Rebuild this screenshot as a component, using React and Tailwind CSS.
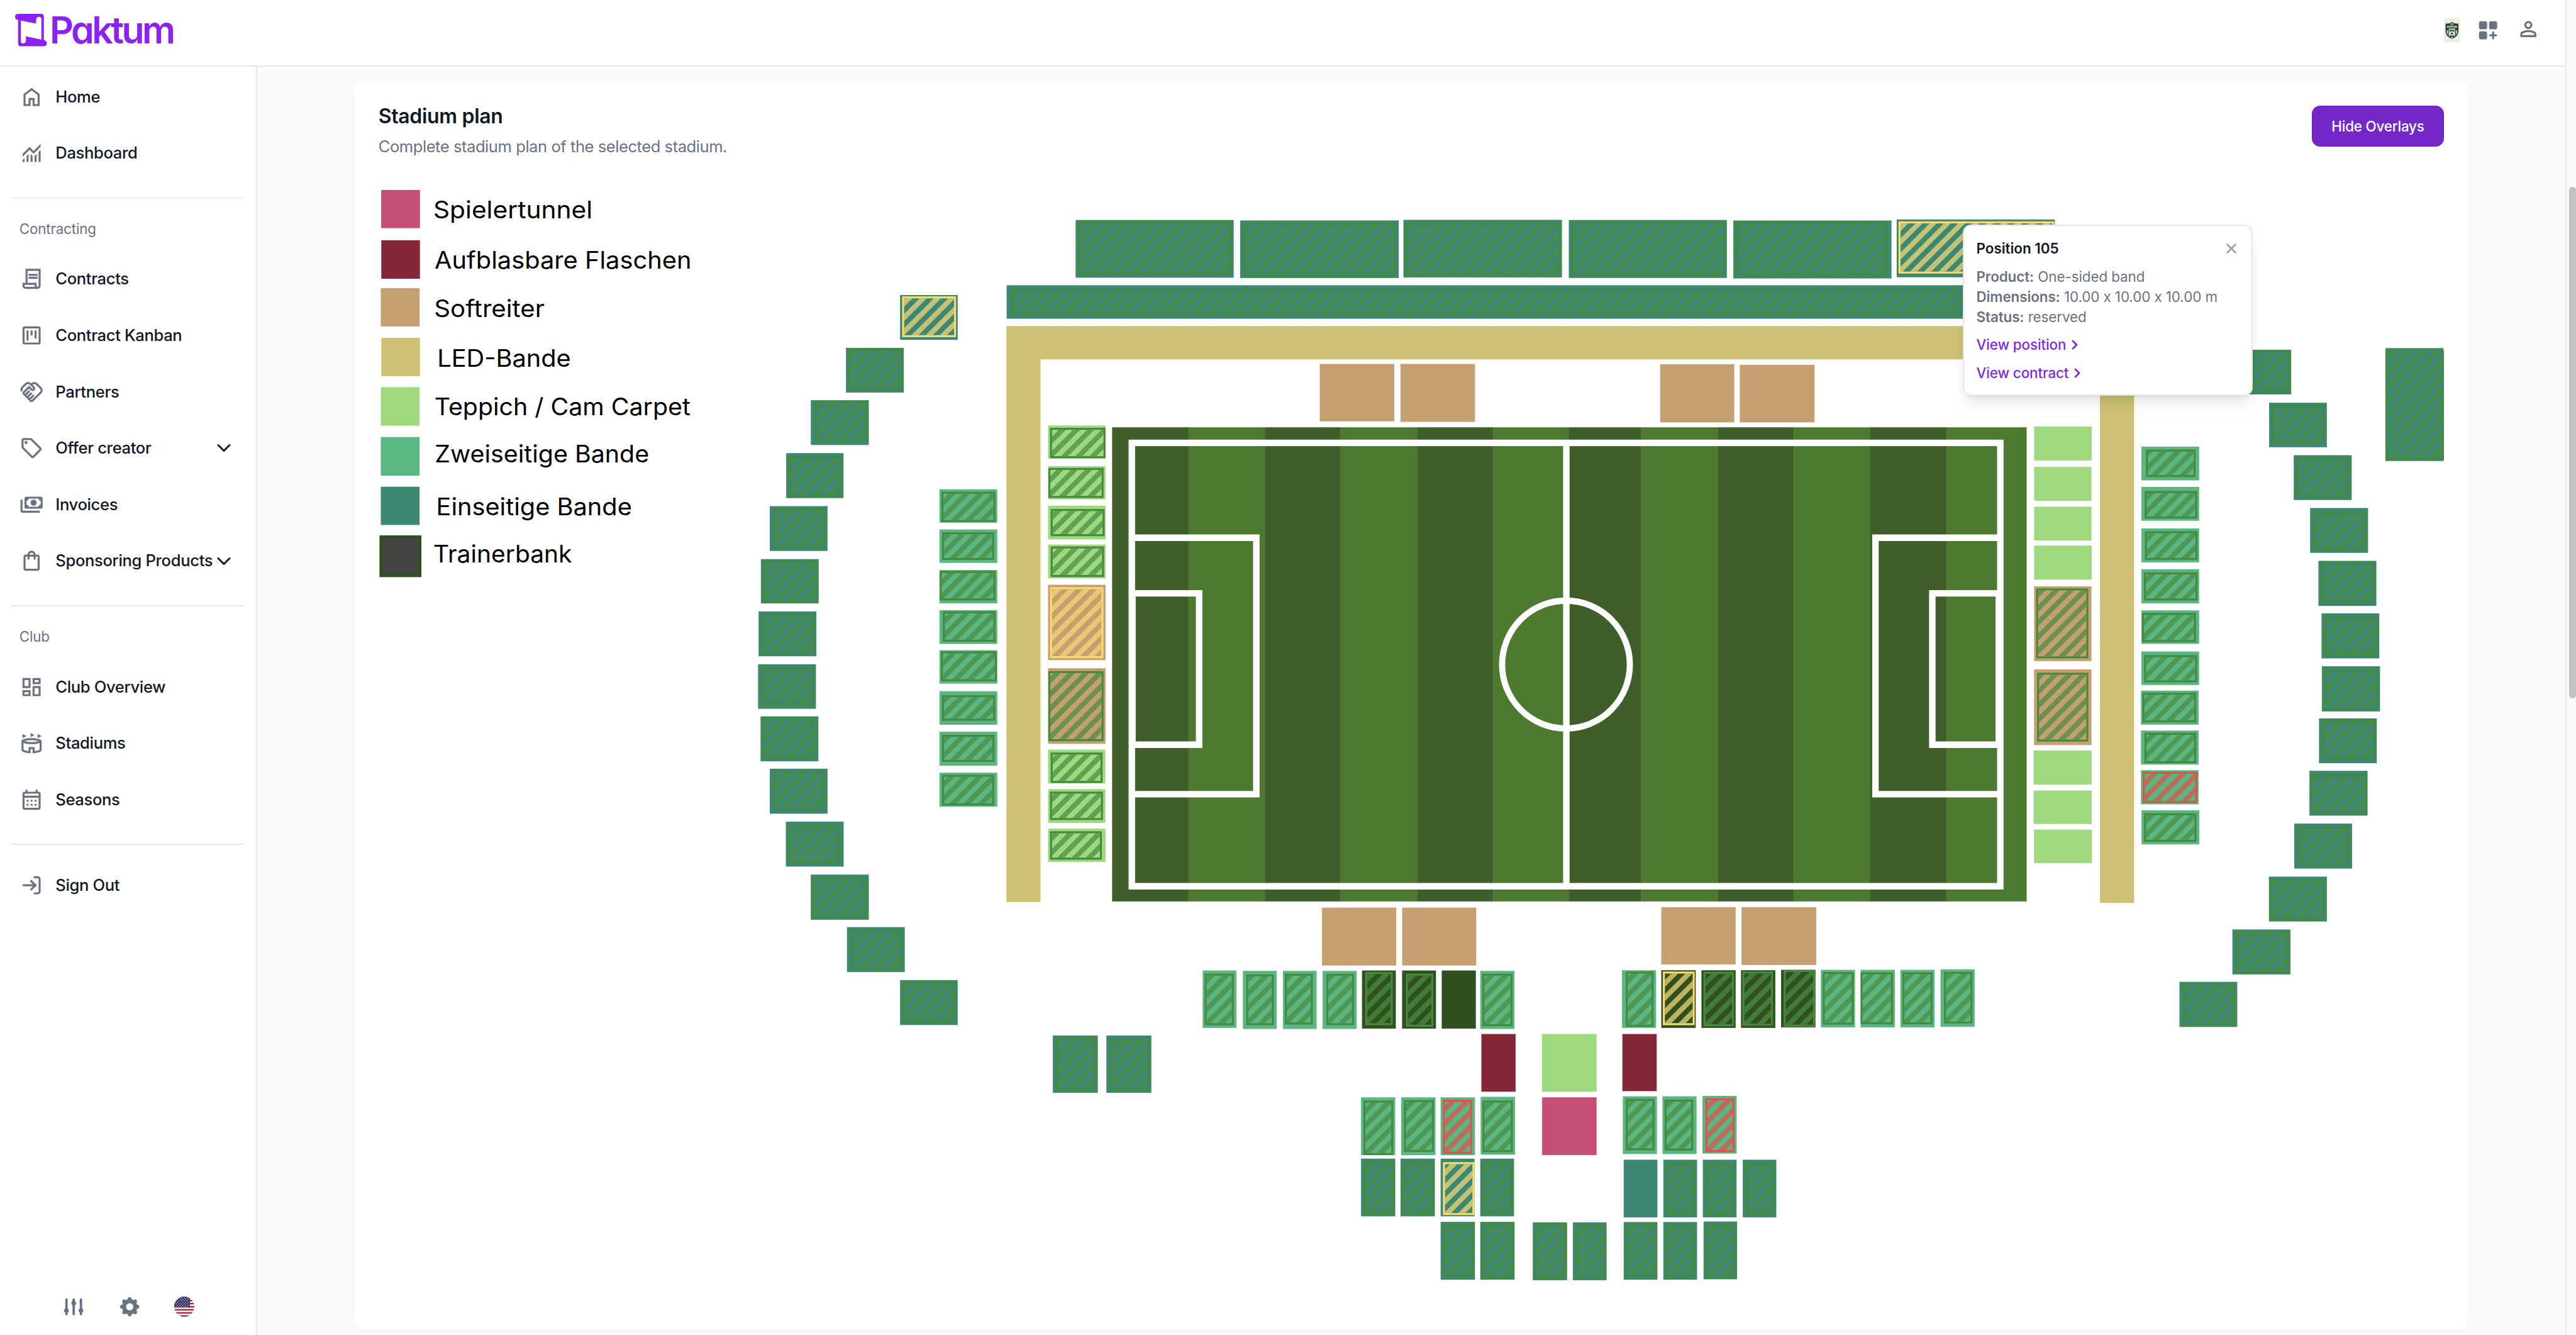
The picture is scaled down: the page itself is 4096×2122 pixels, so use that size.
import React from "react";
import { ChevronDown, ChevronRight, X } from "lucide-react";
import {
  MdOutlineHandshake,
  MdOutlineLocalOffer,
  MdOutlineDashboard,
  MdOutlineStadium,
} from "react-icons/md";

/* ---------- icons ---------- */

function Glyph({ d, children }) {
  return (
    <svg viewBox="0 0 24 24" fill="currentColor" fillRule="evenodd" className="size-full">
      {d ? <path d={d} /> : children}
    </svg>
  );
}

const HOME = "M6 19h3v-6h6v6h3v-9l-6-4.5L6 10v9Zm-2 2V9l8-6l8 6v12h-7v-6h-2v6H4Z";
const CHART =
  "M3 21v-2l2-2v4H3Zm4 0v-6l2-2v8H7Zm4 0v-8l2 2.025V21h-2Zm4 0v-5.975l2-2V21h-2Zm4 0V11l2-2v12h-2ZM3 15.825V13l7-7l4 4l7-7v2.825l-7 7l-4-4l-7 7Z";
const CONTRACT =
  "M6 22q-1.25 0-2.125-.875T3 19v-3h3V2h15v17q0 1.25-.875 2.125T18 22H6ZM18 20q.425 0 .713-.288T19 19V4H8v12h9v3q0 .425.288.713T18 20ZM9 9V7h9v2H9Zm0 3v-2h9v2H9ZM6 20h9v-2H5v1q0 .425.288.713T6 20Z";
const KANBAN =
  "M7 17h2V7H7v10Zm8-2h2V7h-2v8Zm-4-3h2V7h-2v5ZM5 21q-.825 0-1.413-.588T3 19V5q0-.825.588-1.413T5 3h14q.825 0 1.413.588T21 5v14q0 .825-.588 1.413T19 21H5Zm0-2h14V5H5v14Z";
const BILLS =
  "M7 4h14a2 2 0 0 1 2 2v8a2 2 0 0 1-2 2H7a2 2 0 0 1-2-2V6a2 2 0 0 1 2-2ZM9 6a2 2 0 0 1-2 2v4a2 2 0 0 1 2 2h10a2 2 0 0 1 2-2V8a2 2 0 0 1-2-2H9ZM14 7a3 3 0 1 1 0 6a3 3 0 0 1 0-6ZM1 7h2v11h17v2H3a2 2 0 0 1-2-2V7Z";
const BAG =
  "M6 22q-.825 0-1.413-.588T4 20V8q0-.825.588-1.413T6 6h2q0-1.65 1.175-2.825T12 2q1.65 0 2.825 1.175T16 6h2q.825 0 1.413.588T20 8v12q0 .825-.588 1.413T18 22H6Zm0-2h12V8h-2v2q0 .425-.288.713T15 11q-.425 0-.713-.288T14 10V8h-4v2q0 .425-.288.713T9 11q-.425 0-.713-.288T8 10V8H6v12Zm4-14h4q0-.825-.588-1.413T12 4q-.825 0-1.413.588T10 6Z";
const PERSON =
  "M12 12q-1.65 0-2.825-1.175T8 8t1.175-2.825T12 4t2.825 1.175T16 8t-1.175 2.825T12 12m-8 8v-2.8q0-.85.438-1.562T5.6 14.55q1.55-.775 3.15-1.162T12 13t3.25.388t3.15 1.162q.725.375 1.163 1.088T20 17.2V20zm2-2h12v-.8q0-.275-.137-.5t-.363-.35q-1.35-.675-2.725-1.012T12 15t-2.775.338T6.5 16.35q-.225.125-.363.35T6 17.2zm6-8q.825 0 1.413-.587T14 8t-.587-1.412T12 6t-1.412.588T10 8t.588 1.413T12 10";

function CalendarIcon() {
  return (
    <Glyph>
      <path d="M5 22q-.825 0-1.413-.588T3 20V6q0-.825.588-1.413T5 4h1V2h2v2h8V2h2v2h1q.825 0 1.413.588T21 6v14q0 .825-.588 1.413T19 22H5Zm0-2h14V10H5v10ZM5 8h14V6H5v2Z" />
      {[8, 12, 16].map((cx) => (
        <g key={cx}>
          <circle cx={cx} cy="13" r="1.05" />
          <circle cx={cx} cy="17" r="1.05" />
        </g>
      ))}
    </Glyph>
  );
}

function SignOutIcon() {
  return (
    <svg viewBox="0 0 24 24" fill="none" stroke="currentColor" strokeWidth="2" strokeLinecap="round" strokeLinejoin="round" className="size-full">
      <path d="M15 4h3a2 2 0 0 1 2 2v12a2 2 0 0 1-2 2h-3M4 12h12M11.6 7.8L16 12l-4.4 4.2" />
    </svg>
  );
}

function AppsAddIcon() {
  return (
    <Glyph>
      <rect x="3" y="3" width="8" height="8" rx="2" />
      <rect x="13" y="3" width="8" height="8" rx="2" />
      <rect x="3" y="13" width="8" height="8" rx="2" />
      <path d="M17 13a1 1 0 0 1 1 1v2h2a1 1 0 0 1 0 2h-2v2a1 1 0 0 1-2 0v-2h-2a1 1 0 0 1 0-2h2v-2a1 1 0 0 1 1-1Z" />
    </Glyph>
  );
}

function SlidersIcon() {
  return (
    <svg viewBox="0 0 20 20" fill="currentColor" className="size-[38.4px]">
      <path d="M5 4a1 1 0 00-2 0v7.268a2 2 0 000 3.464V16a1 1 0 102 0v-1.268a2 2 0 000-3.464V4zM11 4a1 1 0 10-2 0v1.268a2 2 0 000 3.464V16a1 1 0 102 0V8.732a2 2 0 000-3.464V4zM16 3a1 1 0 011 1v7.268a2 2 0 010 3.464V16a1 1 0 11-2 0v-1.268a2 2 0 010-3.464V4a1 1 0 011-1z" />
    </svg>
  );
}

function GearIcon() {
  return (
    <svg viewBox="0 0 20 20" fill="currentColor" fillRule="evenodd" className="size-[38.4px]">
      <path d="M11.49 3.17c-.38-1.56-2.6-1.56-2.98 0a1.532 1.532 0 01-2.286.948c-1.372-.836-2.942.734-2.106 2.106.54.886.061 2.042-.947 2.287-1.561.379-1.561 2.6 0 2.978a1.532 1.532 0 01.947 2.287c-.836 1.372.734 2.942 2.106 2.106a1.532 1.532 0 012.287.947c.379 1.561 2.6 1.561 2.978 0a1.533 1.533 0 012.287-.947c1.372.836 2.942-.734 2.106-2.106a1.533 1.533 0 01.947-2.287c1.561-.379 1.561-2.6 0-2.978a1.532 1.532 0 01-.947-2.287c.836-1.372-.734-2.942-2.106-2.106a1.532 1.532 0 01-2.287-.947zM10 13a3 3 0 100-6 3 3 0 000 6z" />
    </svg>
  );
}

function FlagIcon() {
  const stripes = [0, 1, 2, 3, 4, 5, 6];
  const stars = [];
  for (let r = 0; r < 7; r++) for (let c = 0; c < 6; c++) stars.push([2 + c * 2.7 + (r % 2) * 1.35, 1.2 + r * 1.5]);
  return (
    <svg viewBox="0 0 20 20" className="size-8">
      <defs>
        <clipPath id="flag-round">
          <circle cx="10" cy="10" r="10" />
        </clipPath>
      </defs>
      <g clipPath="url(#flag-round)">
        <rect width="20" height="20" fill="#fff" />
        {stripes.map((i) => (
          <rect key={i} y={i * 3.08} width="20" height="1.54" fill="#a72a37" />
        ))}
        <rect width="15.6" height="10.8" fill="#36336b" />
        {stars.map(([x, y], i) => (
          <circle key={i} cx={x} cy={y} r="0.45" fill="#fff" fillOpacity={x < 15 ? 1 : 0} />
        ))}
      </g>
    </svg>
  );
}

function ClubCrest() {
  return (
    <svg viewBox="0 0 70 105" className="h-[38.4px] w-[25.6px] shrink-0">
      <rect width="70" height="105" fill="#efece2" />
      <path d="M35 16l8 5q10 3 20 2v34q0 22-28 33Q7 79 7 57V23q10 1 20-2Z" fill="#22442f" />
      <path d="M13 52h4v20l-4-6ZM21 52h4v28l-4-3ZM45 52h4v25l-4 3ZM53 52h4v14l-4 6Z" fill="#efece2" />
      <circle cx="35" cy="66" r="10" fill="#efece2" />
      <path d="M35 61l5 4-2 6h-6l-2-6Z" fill="#22442f" />
      <path d="M30 80l5 4 5-4v4l-5 5-5-5Z" fill="#efece2" />
      <g fill="#efece2" textAnchor="middle" fontFamily="Inter, sans-serif" fontWeight="800">
        <text x="35" y="31" fontSize="10">FC</text>
        <text x="35" y="41" fontSize="9" textLength="46" lengthAdjust="spacingAndGlyphs">SPORTING</text>
        <text x="35" y="51" fontSize="9" textLength="28" lengthAdjust="spacingAndGlyphs">DEMO</text>
      </g>
    </svg>
  );
}

function BrandMark() {
  return (
    <svg viewBox="0 0 62 63" className="h-[51.6px] w-[50.8px]" fill="#8b21f2" fillRule="evenodd">
      <path d="M6 0H51Q55.8 0 55.8 5V51Q61.6 52 61.6 57Q61.6 63 55 63H11Q5.8 63 5.8 57V12Q0 11 0 6Q0 0 6 0ZM11.2 13.2V52Q11.2 57.4 15 57.4Q21 57.4 21 51V43.6L51 50V10.5Q51 5.7 46.5 5.7Q41 5.7 40.6 13V19Z" />
    </svg>
  );
}

/* ---------- shell ---------- */

function Header() {
  return (
    <header className="flex h-[105.6px] shrink-0 items-center justify-between border-b-2 border-gray-200 bg-white pr-[39px] pb-[8px] pl-[23.8px]">
      <div className="flex items-center gap-[4.5px]">
        <BrandMark />
        <span className="text-[59px] leading-[60px] font-semibold tracking-[-3.6px] text-[#8b21f2] [font-feature-settings:'cv11']">
          Paktum
        </span>
      </div>
      <div className="flex items-center gap-[25.6px] text-gray-500">
        <ClubCrest />
        <div className="size-[38.4px]"><AppsAddIcon /></div>
        <div className="-mt-[3px] size-[38.4px]"><Glyph d={PERSON} /></div>
      </div>
    </header>
  );
}

function NavItem({ icon, label, expandable }) {
  return (
    <a className="flex h-[89.6px] items-center pr-[32.5px] pl-[30.7px]">
      <span className="size-[38.4px] shrink-0 text-gray-500">{icon}</span>
      <span className="ml-[19.2px] flex-1 text-[25.6px] leading-[38.4px] font-medium tracking-[-0.36px] whitespace-nowrap text-gray-900">
        {label}
      </span>
      {expandable && <ChevronDown className="size-[36px] shrink-0 text-gray-900" strokeWidth={2} />}
    </a>
  );
}

function Divider() {
  return <div className="mr-[18.6px] ml-[17.6px] h-[1.6px] shrink-0 bg-gray-200" />;
}

function SectionLabel({ children }) {
  return (
    <div className="h-[83.6px] pt-[26.6px] pl-[30.7px] text-[22.4px] leading-[44.8px] tracking-[-0.15px] text-gray-500">
      {children}
    </div>
  );
}

function Sidebar() {
  return (
    <aside className="flex w-[408.6px] shrink-0 flex-col border-r-2 border-gray-200 bg-white pt-[3.6px]">
      <nav className="flex flex-col pb-[25.2px]">
        <NavItem icon={<Glyph d={HOME} />} label="Home" />
        <NavItem icon={<Glyph d={CHART} />} label="Dashboard" />
      </nav>
      <Divider />
      <SectionLabel>Contracting</SectionLabel>
      <nav className="flex flex-col pb-[25.6px]">
        <NavItem icon={<Glyph d={CONTRACT} />} label="Contracts" />
        <NavItem icon={<Glyph d={KANBAN} />} label="Contract Kanban" />
        <NavItem icon={<MdOutlineHandshake className="size-full" />} label="Partners" />
        <NavItem icon={<MdOutlineLocalOffer className="size-full" />} label="Offer creator" expandable />
        <NavItem icon={<Glyph d={BILLS} />} label="Invoices" />
        <NavItem icon={<Glyph d={BAG} />} label="Sponsoring Products" expandable />
      </nav>
      <Divider />
      <SectionLabel>Club</SectionLabel>
      <nav className="flex flex-col pb-[25.6px]">
        <NavItem icon={<MdOutlineDashboard className="size-full" />} label="Club Overview" />
        <NavItem icon={<MdOutlineStadium className="size-full" />} label="Stadiums" />
        <NavItem icon={<CalendarIcon />} label="Seasons" />
      </nav>
      <Divider />
      <nav className="flex flex-col pt-[19.6px]">
        <NavItem icon={<SignOutIcon />} label="Sign Out" />
      </nav>
      <div className="mt-auto flex items-center gap-[51px] pb-[26px] pl-[98px] text-gray-500">
        <SlidersIcon />
        <GearIcon />
        <FlagIcon />
      </div>
    </aside>
  );
}

function Scrollbar() {
  return (
    <div className="w-[17.2px] shrink-0 border-l-2 border-[#e8e8e8] bg-[#fafafa] pt-[296.5px] pl-[4px]">
      <div className="h-[813px] w-[11px] rounded-full bg-[#c1c1c1]" />
    </div>
  );
}

/* ---------- stadium plan ---------- */

const TEAL = "#3d8874";
const MINT = "#5ab682";
const LIME = "#9fd97e";
const TAN = "#c59f6f";
const SAND = "#cdc274";
const PINE = "#30511f";
const WINE = "#842737";
const ROSE = "#c64f7a";

const STATUS = {
  free: { line: "#458a3d", fill: "#498c43" },
  reserved: { line: "#fbda70", fill: "#f7d876" },
  sold: { line: "#df524c", fill: "#df5249" },
};

/* [left, top, right, bottom] of each area, then the same for its status overlay */
const AREAS = [
  {
    color: TEAL,
    items: [
      [2087.7, 427, 2394.5, 539, 2092.2, 429.8, 2391.3, 532.4],
      [2407, 427.9, 2715, 539.6, 2413.4, 431.7, 2709, 537.3],
      [2724, 426.8, 3031.7, 538.5, 2726.8, 431.7, 3030, 535.3],
      [3045, 427, 3351.8, 539.5, 3050, 431, 3349, 535.3],
      [3364.3, 428, 3671.4, 540.5, 3367.9, 430.7, 3663.4, 536],
      [3681.4, 426, 3988.4, 538.2, 3685, 429.7, 3987.2, 531, "reserved"],
      [1953.8, 553.6, 4142.2, 618.6, 1962.7, 562.4, 4138, 611.3],
      [1746.9, 572.6, 1858.8, 659.6, 1751, 575.2, 1855.6, 654.4, "reserved"],
      [1641.9, 675.1, 1754.2, 762, 1645.4, 676.5, 1753.5, 756.6],
      [1573.7, 776.7, 1686.3, 863.6, 1580.7, 778.4, 1683.4, 857.6],
      [1525.9, 879.4, 1637.2, 966.7, 1530, 884.9, 1633.6, 964.4],
      [1494, 982.2, 1606.2, 1069.2, 1501.3, 987.3, 1603, 1064.3],
      [1476.8, 1085, 1589, 1171, 1479.3, 1088.4, 1585.8, 1169.9],
      [1472.3, 1186.5, 1584.5, 1273.6, 1478.7, 1193.2, 1580.7, 1268],
      [1471.3, 1289.1, 1583.6, 1375.5, 1477.7, 1295.7, 1578.8, 1368.6],
      [1476.1, 1390.1, 1588.4, 1477.4, 1479, 1393.3, 1585.2, 1470.8],
      [1494, 1491.7, 1606.2, 1579, 1500.7, 1496.3, 1601, 1571.8],
      [1525.2, 1594.5, 1637.5, 1681.7, 1529.4, 1601.7, 1632, 1675.4],
      [1573.7, 1697.2, 1686.3, 1784.8, 1575.3, 1703.3, 1682.4, 1780.5],
      [1643.9, 1799.1, 1756.1, 1886.4, 1650.9, 1804.6, 1751.6, 1882.7],
      [1746.9, 1901.9, 1858.8, 1989.1, 1750.4, 1904.8, 1855.6, 1984],
      [2043.4, 2009.5, 2130.8, 2120.6, 2049.1, 2013.8, 2129.2, 2116],
      [2147.4, 2009.5, 2234.7, 2120.6, 2154.7, 2016.4, 2231.2, 2116],
      [4335, 678.8, 4447.2, 765.5, 4341, 679.7, 4446.4, 762.3],
      [4404.3, 781.6, 4516.4, 868, 4408.9, 786.7, 4513.4, 861.3],
      [4452.1, 883.4, 4564.6, 970.4, 4456.7, 887.5, 4561.2, 965],
      [4483.9, 985.9, 4596.4, 1072.9, 4489.3, 992.8, 4594.1, 1067.1],
      [4500, 1088.4, 4612.5, 1175.9, 4506.1, 1091.5, 4610.2, 1169.3],
      [4506.1, 1190.3, 4618.2, 1277.7, 4509.9, 1196.9, 4614.8, 1272.7],
      [4506.7, 1293, 4619.6, 1380.6, 4510.6, 1299.8, 4615.1, 1377.3],
      [4501.1, 1394.1, 4613.3, 1481.1, 4507.1, 1396, 4610.9, 1474.4],
      [4482.5, 1495.8, 4595.4, 1582.8, 4486, 1503.1, 4594.7, 1578.4],
      [4453, 1598.2, 4565.3, 1685.5, 4461.5, 1603.9, 4560.4, 1679.8],
      [4403.9, 1701.2, 4516.5, 1788.2, 4406, 1706.4, 4512.7, 1785.5],
      [4333.1, 1803.7, 4445.7, 1891, 4339, 1808.6, 4443.9, 1888.2],
      [4230.3, 1905.3, 4342.5, 1992.9, 4236.6, 1910.2, 4339.4, 1989.4],
      [4630.1, 675.6, 4742.6, 894.7, 4630.5, 680.2, 4743.7, 892.6],
      [2641.7, 2248.3, 2708.1, 2360.3, 2646.3, 2253.7, 2707.5, 2357.2],
      [2718.4, 2248.3, 2785, 2360.3, 2721.9, 2254.7, 2784, 2357.2],
      [2796.2, 2248.3, 2862, 2360.3, 2800.8, 2255.2, 2861.8, 2357.8, "reserved"],
      [2873.1, 2248.3, 2938.7, 2360.3, 2876.9, 2253.7, 2937.9, 2355.2],
      [2796.2, 2371, 2862.8, 2483.3, 2800.8, 2375.6, 2862, 2478.2],
      [2873.1, 2371, 2939.8, 2483.3, 2877.2, 2372.8, 2939, 2482.2],
      [2975, 2372, 3041.4, 2484.3, 2979.1, 2374.6, 3041.4, 2482.8],
      [3052.8, 2372, 3118.3, 2484.3, 3058, 2376, 3117.7, 2479.7],
      [3151.5, 2250.4, 3217, 2362.3],
      [3228.5, 2250.4, 3293.9, 2362.3, 3233.6, 2255.2, 3289.3, 2357.2],
      [3305.1, 2250.4, 3370.6, 2362.3, 3312, 2256.7, 3365.1, 2359.3],
      [3382.6, 2250.4, 3447.8, 2362.3, 3387.5, 2256, 3443.5, 2356.7],
      [3151.5, 2371.3, 3217, 2483.3, 3155.6, 2373.8, 3215.3, 2478.2],
      [3228.5, 2371.3, 3293.9, 2483.3, 3233, 2377.4, 3289.3, 2480.7],
      [3306.5, 2370.3, 3371.7, 2482.5, 3310.6, 2375.4, 3369.1, 2480.7],
    ],
  },
  {
    color: MINT,
    items: [
      [1823.4, 949.5, 1935.6, 1014.3, 1827.2, 954.3, 1932.1, 1013.2],
      [1823.4, 1027.5, 1935.6, 1092.4, 1828.5, 1033, 1929.6, 1086.7],
      [1823.4, 1106.2, 1935.6, 1171, 1823.7, 1108.2, 1932.1, 1165.3],
      [1823.4, 1184, 1935.6, 1249.7, 1830, 1186.3, 1932.1, 1245.4],
      [1823.4, 1261.8, 1935.6, 1326.7, 1826.3, 1264.1, 1934.7, 1322.1],
      [1823.4, 1341.3, 1935.6, 1406.5, 1828.2, 1349, 1931.5, 1398.7],
      [1823.4, 1420, 1935.6, 1486, 1828.2, 1426, 1930.2, 1478.5],
      [1823.4, 1499.5, 1935.6, 1565.5, 1828.2, 1503.5, 1929.6, 1562.9],
      [4156.4, 866.8, 4268.5, 932.2, 4165.2, 872.5, 4261.6, 925.9],
      [4156.4, 944.9, 4268.5, 1010.6, 4162.9, 952.9, 4264.7, 1006.3],
      [4156.4, 1025.5, 4268.5, 1091.3, 4163.3, 1031, 4265.4, 1086.7],
      [4156.4, 1104.7, 4268.5, 1171, 4161.3, 1110.8, 4265.4, 1165.3],
      [4156.4, 1184.6, 4268.5, 1249.5, 4157.5, 1189.4, 4262.4, 1246],
      [4156.4, 1264.3, 4268.5, 1329.3, 4161.6, 1271.3, 4264.7, 1324.2],
      [4155.6, 1340.2, 4267.5, 1406.3, 4158.4, 1344.3, 4262.9, 1401.7],
      [4155.6, 1417.7, 4267.5, 1483.8, 4162.3, 1422, 4262.9, 1480.9],
      [4155.6, 1494.7, 4267.5, 1560.8, 4159.1, 1497.7, 4264.7, 1558.1, "sold"],
      [4156.6, 1572.5, 4268.9, 1638.6, 4161.6, 1578.2, 4263.3, 1633.7],
      [2334.3, 1883.3, 2399.9, 1994.7, 2338.1, 1889.4, 2394.7, 1989.4],
      [2412.4, 1884, 2478, 1996.8, 2418.9, 1890.9, 2472.5, 1989.4],
      [2490.1, 1884, 2555.5, 1996.8, 2493.9, 1889.6, 2548.1, 1988.1],
      [2567.1, 1884, 2633.3, 1996.8, 2574.2, 1889.6, 2628.1, 1989.4],
      [2873.1, 1884, 2939.5, 1996.8, 2877.2, 1889.4, 2935.7, 1991.4],
      [3148.1, 1882.8, 3214.4, 1994.7, 3155.6, 1885.3, 3209.5, 1992.4],
      [3534.2, 1882, 3600.5, 1993.7, 3537.9, 1886.3, 3597.9, 1988.4],
      [3611.4, 1882, 3678, 1993.7, 3611.4, 1886.8, 3674.2, 1987.6],
      [3688.6, 1882, 3754.9, 1993.7, 3692.6, 1886.8, 3750.9, 1987.6],
      [3766.6, 1881, 3832.7, 1992.7, 3773.3, 1885.8, 3828.4, 1986.3],
      [2641.7, 2129.4, 2708.1, 2241.7, 2646.3, 2135.8, 2704.3, 2241.4],
      [2719.5, 2129.4, 2786.1, 2241.7, 2724.9, 2134.8, 2782.9, 2235.3],
      [2796.2, 2129.4, 2862.8, 2241.7, 2800.8, 2134, 2857.1, 2238.9, "sold"],
      [2873.9, 2128.4, 2940.6, 2240.7, 2877.5, 2135.8, 2936.3, 2235.8],
      [3149.8, 2127.4, 3216.1, 2239.4, 3155.6, 2132.2, 3211.3, 2232.2],
      [3226.8, 2127.4, 3293, 2239.4, 3230.8, 2133.8, 3286.5, 2232.8],
      [3304.5, 2126.6, 3370.8, 2238.6, 3310, 2131.2, 3366.5, 2235.6, "sold"],
    ],
  },
  {
    color: LIME,
    items: [
      [2034.2, 825.8, 2145.8, 890.3, 2038, 830.3, 2145.8, 889.2],
      [2034.2, 904.7, 2145.8, 969, 2034.8, 908.1, 2142, 966.4],
      [2034.2, 981.3, 2145.8, 1046.8, 2039.3, 987.9, 2143.9, 1040.5],
      [2034.2, 1056.8, 2145.8, 1122.5, 2039.3, 1060.5, 2142.9, 1119.7],
      [2034.2, 1454.7, 2145.4, 1520.4, 2039.3, 1460.4, 2140, 1519.3],
      [2034.2, 1531.3, 2145.4, 1597, 2038, 1536.2, 2140.7, 1591.3],
      [2034.2, 1608, 2145.8, 1672.8, 2038, 1613.1, 2138.7, 1668.2],
      [3948.2, 827.8, 4059.9, 893.8],
      [3948.2, 906.1, 4059.5, 971.8],
      [3948.2, 983.3, 4059.5, 1049],
      [3948.2, 1058.8, 4059.9, 1125],
      [3947.2, 1456.5, 4059.8, 1522.6],
      [3947.2, 1534, 4059.8, 1599],
      [3948, 1609.9, 4060.3, 1674.9],
      [2993.2, 2006.5, 3098.9, 2118.5],
    ],
  },
  {
    color: TAN,
    items: [
      [2561.6, 706.3, 2706.2, 817.7],
      [2718.3, 706.3, 2862.9, 818.7],
      [3222.3, 707, 3366.1, 819.7],
      [3376.8, 708, 3521.9, 819.7],
      [2566, 1761.3, 2710, 1873.6],
      [2721.6, 1761.3, 2865.3, 1873.6],
      [3224.5, 1760.3, 3368.8, 1871.5],
      [3380.3, 1760.3, 3525.3, 1872.6],
      [2034.2, 1134.9, 2145.8, 1281, 2038, 1139.5, 2141.6, 1277.3, "reserved"],
      [2034.2, 1296.8, 2145.8, 1443.5, 2034.8, 1302.3, 2142, 1438.3],
      [3948.2, 1137.8, 4059.5, 1283, 3952, 1141.8, 4053.4, 1277.6],
      [3948, 1299, 4059.5, 1445.9, 3953.9, 1305.5, 4053.5, 1439.1],
    ],
  },
  {
    color: PINE,
    items: [
      [2643.6, 1883.3, 2709.2, 1996, 2649.8, 1886.3, 2703.2, 1989.4],
      [2721.4, 1883.3, 2787.2, 1996, 2728.9, 1889.4, 2781.8, 1992.4],
      [2798.3, 1883.3, 2864.5, 1996],
      [3224.5, 1882.8, 3291.3, 1994.7, 3227.6, 1885.3, 3289.3, 1989.4, "reserved"],
      [3302.5, 1882.8, 3368.8, 1994.7, 3306.5, 1885.8, 3365.7, 1991.4],
      [3379.2, 1882.8, 3445.8, 1994.7, 3382, 1885.3, 3441.4, 1990.4],
      [3457, 1882, 3523.8, 1993.7, 3462.1, 1882.2, 3523.2, 1992.4],
    ],
  },
  { color: WINE, items: [[2875.3, 2006.5, 2941.7, 2118.5], [3149, 2006.5, 3215.6, 2117.4]] },
  { color: ROSE, items: [[2993.2, 2129.4, 3098.9, 2241.4]] },
];

/* left edge of every mown band, ending with the right edge of the grass */
const BANDS = [2158.5, 2306.8, 2454.9, 2601.8, 2750.9, 2898.2, 3044.6, 3184.8, 3334.4, 3481.7, 3630, 3778.3, 3933.3];

const LEGEND = [
  { name: "Spielertunnel", color: ROSE, box: [739.7, 368.8, 815, 442.9], x: 841, y: 423.6, w: 309 },
  { name: "Aufblasbare Flaschen", color: WINE, box: [740, 466.3, 815, 541], x: 843.5, y: 521.2, w: 498.5 },
  { name: "Softreiter", color: TAN, box: [739, 559.4, 814.3, 633.6], x: 842.5, y: 615.5, w: 214.5 },
  { name: "LED-Bande", color: SAND, box: [740, 655.7, 815, 729.9], x: 848.5, y: 712.4, w: 259.5 },
  { name: "Teppich / Cam Carpet", color: LIME, box: [739, 751.4, 814.3, 826.2], x: 843, y: 806.2, w: 497 },
  { name: "Zweiseitige Bande", color: MINT, box: [739, 848.3, 814.3, 923.2], x: 843.8, y: 898, w: 416 },
  { name: "Einseitige Bande", color: TEAL, box: [739, 944.6, 814.3, 1018.8], x: 846.5, y: 1000, w: 380 },
  { name: "Trainerbank", color: "#444643", box: [739.5, 1042, 814.8, 1117], x: 841, y: 1091.8, w: 269 , edge: PINE },
];

function StatusOverlay({ box, status = "free" }) {
  const [l, t, r, b] = box;
  const w = r - l;
  const h = b - t;
  const tone = STATUS[status];
  return (
    <g transform={`translate(${r - 3.9} ${b - 3.9})`}>
      <rect x={7.8 - w} y={7.8 - h} width={w - 7.8} height={h - 7.8} fill={`url(#hatch-${status})`} />
      <rect x={5.85 - w} y={5.85 - h} width={w - 3.9} height={h - 3.9} fill="none" stroke={tone.line} strokeWidth="3.9" />
    </g>
  );
}

function StadiumPlan() {
  return (
    <svg viewBox="687.2 320 4104 2210" className="block h-[1810.4px] w-full">
      <defs>
        {Object.entries(STATUS).map(([key, tone]) => (
          <pattern key={key} id={`hatch-${key}`} width="19.53" height="19.53" patternUnits="userSpaceOnUse" patternTransform="rotate(45)">
            <rect width="9.765" height="19.53" fill={tone.fill} fillOpacity="0.72" />
          </pattern>
        ))}
      </defs>

      {LEGEND.map(({ name, color, box, x, y, w, edge }) => (
        <g key={name}>
          <rect x={box[0]} y={box[1]} width={box[2] - box[0]} height={box[3] - box[1]} fill={color} stroke={edge} strokeWidth={edge ? 6 : 0} />
          <text x={x} y={y} fontSize="46" fontFamily="Inter, sans-serif" textLength={w} lengthAdjust="spacingAndGlyphs" fill="#000">
            {name}
          </text>
        </g>
      ))}

      <path d="M1953.3 632.7H4142.2V1752.2H4076V697.5H2019.5V1750.3H1953.3Z" fill={SAND} />

      {BANDS.slice(0, -1).map((x, i) => (
        <rect key={x} x={x} y="829.3" width={BANDS[i + 1] - x + 0.4} height="920" fill={i % 2 ? "#4d7931" : "#405e29"} />
      ))}
      <g fill="none" stroke="#fff" strokeWidth="12.6">
        <rect x="2196.8" y="859.5" width="1685.8" height="860.3" />
        <path d="M3040.2 859V1720" />
        <circle cx="3039.5" cy="1289.7" r="124" strokeWidth="12" />
        <path d="M2198 1043.6H2438.5V1541.1H2198" />
        <path d="M2198 1151.5H2327.4V1445.2H2198Z" />
        <path d="M3879.6 1043.6H3640.2V1541.1H3879.6" />
        <path d="M3879.6 1151.5H3750.6V1445.2H3879.6Z" />
      </g>

      {AREAS.map(({ color, items }) =>
        items.map(([l, t, r, b, ...overlay]) => (
          <g key={`${l}-${t}`}>
            <rect x={l} y={t} width={r - l} height={b - t} fill={color} />
            {overlay.length > 0 && <StatusOverlay box={overlay.slice(0, 4)} status={overlay[4]} />}
          </g>
        ))
      )}
    </svg>
  );
}

function PopupLink({ children }) {
  return (
    <a className="mt-[12.8px] flex items-center text-[22.4px] leading-8 font-medium tracking-[-0.1px] text-[#8128dc]">
      {children}
      <ChevronRight className="ml-[2px] size-6" strokeWidth={2.8} />
    </a>
  );
}

function PositionPopup() {
  const rows = [
    ["Product:", "One-sided band"],
    ["Dimensions:", "10.00 x 10.00 x 10.00 m"],
    ["Status:", "reserved"],
  ];
  return (
    <div className="absolute top-[227.6px] left-[2558.6px] h-[272px] w-[461px] rounded-[12.8px] border-2 border-gray-200 bg-white px-[19.2px] py-[19.4px] shadow-[0_16px_24px_-5px_rgba(0,0,0,0.1),0_6px_10px_-6px_rgba(0,0,0,0.1)]">
      <div className="flex h-8 items-center justify-between">
        <h3 className="text-[22.4px] leading-8 font-semibold text-gray-900">Position 105</h3>
        <X className="size-[26px] text-gray-400" strokeWidth={2.4} />
      </div>
      <div className="mt-[12.8px] text-[22.4px] leading-8 tracking-[-0.08px] whitespace-nowrap text-gray-500 [font-feature-settings:'calt'_0]">
        {rows.map(([k, v]) => (
          <p key={k}>
            <strong className="font-semibold">{k}</strong> {v}
          </p>
        ))}
      </div>
      <PopupLink>View position</PopupLink>
      <PopupLink>View contract</PopupLink>
    </div>
  );
}

function StadiumCard() {
  return (
    <section className="relative mx-auto h-[1984.6px] w-[3362px] rounded-[12.8px] bg-white shadow-[0_1px_3px_rgba(0,0,0,0.06)]">
      <div className="flex h-[132.4px] items-start justify-between px-[38.4px] pt-[33.4px]">
        <div className="pl-[0.6px]">
          <h2 className="text-[32px] leading-[44.8px] font-semibold tracking-[-0.33px] text-gray-900">Stadium plan</h2>
          <p className="mt-[5.6px] text-[25.6px] leading-[38.4px] tracking-[-0.47px] text-gray-500">
            Complete stadium plan of the selected stadium.
          </p>
        </div>
        <button className="mt-[5px] h-[64.4px] w-[210.8px] rounded-[12.8px] border border-[#6b14c6] bg-[#7428c8] text-[22.4px] font-medium tracking-[-0.2px] text-white">
          Hide Overlays
        </button>
      </div>
      <StadiumPlan />
      <PositionPopup />
    </section>
  );
}

export default function App() {
  return (
    <div className="flex h-[2122px] w-[4096px] overflow-hidden bg-gray-50 font-['Inter',sans-serif] antialiased">
      <div className="flex min-w-0 flex-1 flex-col">
        <Header />
        <div className="flex min-h-0 flex-1">
          <Sidebar />
          <main className="min-w-0 flex-1 bg-[#f9fafc] pt-[24.2px]">
            <StadiumCard />
          </main>
        </div>
      </div>
      <Scrollbar />
    </div>
  );
}
